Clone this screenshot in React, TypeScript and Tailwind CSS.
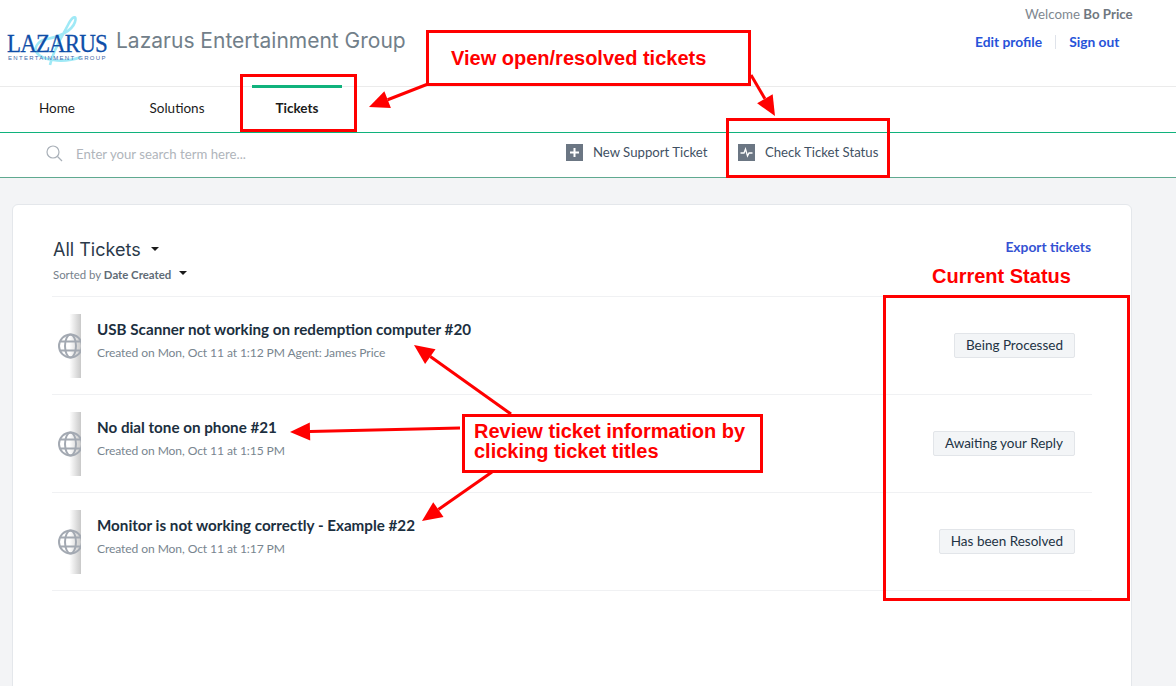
import React from "react";

const ui = { fontFamily: '"Lato", "Noto Sans", sans-serif' };
const heading = { fontFamily: '"Inter", "Noto Sans", sans-serif' };
const anno = { fontFamily: '"Liberation Sans", Arial, sans-serif' };

function Globe() {
  return (
    <div className="relative w-[29px] h-[64px] overflow-hidden bg-gradient-to-r from-white from-[60%] to-[#c9c9c9] shrink-0">
      <svg className="absolute left-[6px] top-[19px]" width="25" height="26" viewBox="0 0 25 26" fill="none" stroke="#a3a9b2" strokeWidth="2">
        <circle cx="12.5" cy="13" r="11.5" />
        <ellipse cx="12.5" cy="13" rx="5.5" ry="11.5" />
        <path d="M2 8.5h21M2 17.5h21" />
      </svg>
    </div>
  );
}

const tickets = [
  { title: "USB Scanner not working on redemption computer #20", sub: "Created on Mon, Oct 11 at 1:12 PM Agent: James Price", status: "Being Processed" },
  { title: "No dial tone on phone #21", sub: "Created on Mon, Oct 11 at 1:15 PM", status: "Awaiting your Reply" },
  { title: "Monitor is not working correctly - Example #22", sub: "Created on Mon, Oct 11 at 1:17 PM", status: "Has been Resolved" },
];

function Arrow({ x1, y1, x2, y2 }: { x1: number; y1: number; x2: number; y2: number }) {
  const a = Math.atan2(y2 - y1, x2 - x1);
  const L = 20, W = 9;
  const bx = x2 - L * Math.cos(a), by = y2 - L * Math.sin(a);
  const px = -Math.sin(a) * W, py = Math.cos(a) * W;
  return (
    <g>
      <line x1={x1} y1={y1} x2={bx} y2={by} stroke="#ff0000" strokeWidth="3" />
      <polygon points={`${x2},${y2} ${bx + px},${by + py} ${bx - px},${by - py}`} fill="#ff0000" />
    </g>
  );
}

export default function App() {
  return (
    <div className="relative w-[1176px] h-[686px] overflow-hidden bg-[#f3f4f6] text-[#223344]" style={ui}>
      <header className="h-[87px] bg-white border-b border-[#ebebeb] flex justify-between">
        <div className="flex pl-[7px] pt-[15px]">
          <div className="relative w-[101px] h-[52px]">
            <svg className="absolute left-0 top-0" width="101" height="52" viewBox="0 0 101 52" fill="none" stroke="#9fe9f6" strokeWidth="2.6">
              <path d="M43 50C46 35 56 20 62 8C66 1 70 0 68 7C65 16 52 22 40 24C30 26 25 34 32 40C40 46 58 48 74 42" />
            </svg>
            <div className="absolute left-0 top-[18px] origin-left scale-x-[0.885] text-[26px] leading-[22px] tracking-[-1px] text-[#0f4ea8] [-webkit-text-stroke:0.3px_#0f4ea8] whitespace-nowrap" style={{ fontFamily: '"Liberation Serif", serif' }}>LAZARUS</div>
            <div className="absolute left-[1px] top-[40px] text-[6px] leading-[6px] tracking-[1.3px] text-[#3f68a8] whitespace-nowrap" style={anno}>ENTERTAINMENT GROUP</div>
          </div>
          <div className="ml-[8px] mt-[10px] text-[21px] leading-[32px] text-[#727f8a] whitespace-nowrap" style={heading}>Lazarus Entertainment Group</div>
        </div>
        <div className="w-[232px] pt-[5px]">
          <div className="pl-[81px] text-[13.3px] leading-[18px] text-[#808890]">Welcome <b className="font-bold text-[#6f7780]">Bo Price</b></div>
          <div className="flex items-center pl-[31px] mt-[10px] text-[13.8px] leading-[18px] font-bold text-[#2753d9]">
            <span>Edit profile</span>
            <span className="mx-[13px] w-px h-[14px] bg-[#dfe3ea]" />
            <span>Sign out</span>
          </div>
        </div>
      </header>

      <nav className="h-[46px] bg-white border-b border-[#10b27c] flex pl-[12px] gap-[30px] text-[13.5px] text-[#1b1b1b]">
        {["Home", "Solutions", "Tickets"].map((t) => (
          <div key={t} className={`relative w-[90px] flex items-center justify-center pb-[3px] ${t === "Tickets" ? "font-bold" : ""}`}>
            {t === "Tickets" && <span className="absolute left-0 right-0 top-[-2px] h-[3px] bg-[#10b27c]" />}
            {t}
          </div>
        ))}
      </nav>

      <div className="h-[45px] bg-white border-b border-[#5fa990] flex items-center text-[13.2px]">
        <svg className="ml-[46px] mt-[-4px]" width="17" height="17" viewBox="0 0 17 17" fill="none" stroke="#a9b0b8" strokeWidth="1.2">
          <circle cx="7" cy="7" r="6" />
          <path d="M11.5 11.5L16 16" />
        </svg>
        <span className="ml-[13px] text-[#b0b5bb]">Enter your search term here...</span>
        <div className="ml-[320px] mt-[-5px] flex items-center text-[#3f5163]">
          <span className="w-[17px] h-[17px] bg-[#6b7683] flex items-center justify-center">
            <svg width="11" height="11" viewBox="0 0 11 11" stroke="#fff" strokeWidth="2"><path d="M5.5 1v9M1 5.5h9" /></svg>
          </span>
          <span className="ml-[10px] w-[145px]">New Support Ticket</span>
          <span className="w-[17px] h-[17px] bg-[#6b7683] flex items-center justify-center">
            <svg width="13" height="11" viewBox="0 0 13 11" fill="none" stroke="#fff" strokeWidth="1.3"><path d="M0.5 6H4L5.5 2L7.5 9L9 6H12.5" /></svg>
          </span>
          <span className="ml-[10px]">Check Ticket Status</span>
        </div>
      </div>

      <main className="ml-[12px] mt-[26px] w-[1120px] h-[600px] bg-white border border-[#e4e7eb] rounded-[6px] px-[39px] pt-[31px]">
        <div className="flex justify-between h-[60px]">
          <div className="pl-[1px]">
            <div className="flex items-center h-[26px] text-[18px] text-[#2b3a4a]" style={heading}>
              All Tickets
              <span className="ml-[10px] w-0 h-0 border-x-[4px] border-x-transparent border-t-[4px] border-t-[#1b1b1b]" />
            </div>
            <div className="flex items-center mt-[4px] h-[18px] text-[11.4px] text-[#76818c]">
              <span>Sorted by&nbsp;<b className="font-bold text-[#5f6b76]">Date Created</b></span>
              <span className="ml-[8px] mt-[-5px] w-0 h-0 border-x-[4px] border-x-transparent border-t-[4px] border-t-[#1b1b1b]" />
            </div>
          </div>
          <span className="mt-[2px] mr-[1px] h-[18px] leading-[18px] text-[13.8px] font-bold text-[#3452d3]">Export tickets</span>
        </div>
        <div className="border-t border-[#f0f1f3]">
          {tickets.map((t) => (
            <div key={t.title} className="h-[98px] border-b border-[#f0f1f3] flex items-center justify-between">
              <div className="flex items-center">
                <Globe />
                <div className="ml-[16px] mb-[11px]">
                  <div className="text-[15.2px] leading-[22px] font-bold text-[#1c2f40]">{t.title}</div>
                  <div className="mt-[4px] text-[12.1px] tracking-[-0.1px] leading-[18px] text-[#78858f]">{t.sub}</div>
                </div>
              </div>
              <span className="mr-[17px] h-[25px] px-[11px] flex items-center bg-[#f3f5f7] border border-[#e2e5e9] rounded-[2px] text-[13.5px] text-[#223344]">{t.status}</span>
            </div>
          ))}
        </div>
      </main>

      <svg className="absolute inset-0 pointer-events-none" width="1176" height="686" viewBox="0 0 1176 686">
        <Arrow x1={428} y1={84} x2={369} y2={107} />
        <Arrow x1={751} y1={75} x2={775} y2={116} />
        <Arrow x1={511} y1={414} x2={414} y2={345} />
        <Arrow x1={460} y1={428} x2={290} y2={432} />
        <Arrow x1={492} y1={472} x2={422} y2={521} />
      </svg>

      <div className="absolute left-[240px] top-[74px] w-[117px] h-[58px] border-[3px] border-[#ff0000]" />
      <div className="absolute left-[726px] top-[118px] w-[164px] h-[60px] border-[3px] border-[#ff0000]" />
      <div className="absolute left-[883px] top-[295px] w-[247px] h-[306px] border-[3px] border-[#ff0000]" />
      <div className="absolute left-[426px] top-[30px] w-[325px] h-[56px] border-[3px] border-[#ff0000] bg-white pl-[22px] pt-[13px] text-[20px] leading-[24px] font-bold text-[#ff0000] whitespace-nowrap" style={anno}>
        View open/resolved tickets
      </div>
      <div className="absolute left-[462px] top-[414px] w-[301px] h-[59px] border-[3px] border-[#ff0000] bg-white pl-[9px] pt-[4px] text-[20px] leading-[20px] font-bold text-[#ff0000] whitespace-nowrap" style={anno}>
        Review ticket information by<br />clicking ticket titles
      </div>
      <div className="absolute left-[932px] top-[264px] text-[20px] leading-[24px] font-bold text-[#ff0000] whitespace-nowrap" style={anno}>Current Status</div>
    </div>
  );
}
